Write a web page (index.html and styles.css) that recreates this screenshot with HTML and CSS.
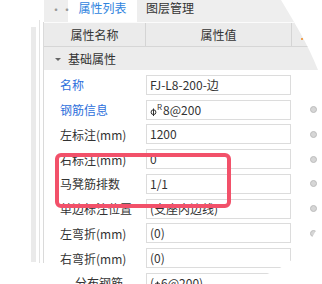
FILE: index.html
```html
<!DOCTYPE html>
<html>
<head>
<meta charset="utf-8">
<link rel="stylesheet" href="styles.css">
</head>
<body>
<div class="app">
  <div class="gutter">
    <div class="band"></div>
    <div class="vline l1"></div>
    <div class="vline l2"></div>
  </div>
  <div class="main">
    <div class="tabbar">
      <div class="tab-pre"><span class="dots">··</span></div>
      <div class="tab active">属性列表</div>
      <div class="tab">图层管理</div>
    </div>
    <div class="header">
      <div class="hc hc1">属性名称</div>
      <div class="hc hc2">属性值</div>
      <div class="hc hc3"><span class="mark"></span></div>
    </div>
    <div class="group"><span class="tri"></span>基础属性</div>
    <div class="rows">
      <div class="row">
        <div class="label blue">名称</div>
        <div class="val">FJ-L8-200-边</div>
      </div>
      <div class="row">
        <div class="label blue">钢筋信息</div>
        <div class="val"><svg class="steel" width="7" height="9" viewBox="0 0 7 9"><circle cx="3.5" cy="5.2" r="2.4" fill="none" stroke="#333" stroke-width="1"/><line x1="3.5" y1="1.5" x2="3.5" y2="9" stroke="#333" stroke-width="1"/></svg><sup class="sup">R</sup>8@200</div>
        <span class="dot"></span>
      </div>
      <div class="row">
        <div class="label">左标注(mm)</div>
        <div class="val">1200</div>
        <span class="dot"></span>
      </div>
      <div class="row">
        <div class="label">右标注(mm)</div>
        <div class="val">0</div>
        <span class="dot"></span>
      </div>
      <div class="row">
        <div class="label">马凳筋排数</div>
        <div class="val">1/1</div>
        <span class="dot"></span>
      </div>
      <div class="row">
        <div class="label">单边标注位置</div>
        <div class="val">(支座内边线)</div>
        <span class="dot"></span>
      </div>
      <div class="row">
        <div class="label">左弯折(mm)</div>
        <div class="val">(0)</div>
        <span class="dot"></span>
      </div>
      <div class="row">
        <div class="label">右弯折(mm)</div>
        <div class="val">(0)</div>
      </div>
      <div class="row">
        <div class="label sub">分布钢筋</div>
        <div class="val">(<svg class="steel" width="7" height="9" viewBox="0 0 7 9"><circle cx="3.5" cy="5.2" r="2.4" fill="none" stroke="#333" stroke-width="1"/><line x1="3.5" y1="1.5" x2="3.5" y2="9" stroke="#333" stroke-width="1"/></svg>6@200)</div>
      </div>
    </div>
  </div>
  <div class="highlight"></div>
</div>
</body>
</html>
```

FILE: styles.css
```css
* { box-sizing: border-box; }
html, body { margin: 0; padding: 0; background: #fff; }
body {
  font-family: "Noto Sans CJK SC", "Noto Sans", sans-serif;
  font-size: 12px;
  color: #333;
  overflow: hidden;
}
.app {
  position: relative;
  width: 322px;
  height: 284px;
  display: flex;
  align-items: flex-start;
  overflow: hidden;
  clip-path: path('M0 0 H281 C294 22 308 44 318 70 L322 84 L322 214 C317 236 300 258 276 270 C262 277 248 281 232 284 L0 284 Z');
}
.gutter {
  width: 44px;
  flex: none;
  display: flex;
  align-items: flex-start;
  padding-left: 31px;
}
.band {
  width: 5px;
  height: 235px;
  margin-top: 27px;
  background: #eaeaea;
}
.vline {
  width: 1px;
  background: #e2e2e2;
}
.l1 { margin-left: 3px; margin-top: 20px; height: 243px; }
.l2 { margin-left: 3px; margin-top: 22px; height: 241px; background: #dadada; }
.main {
  flex: none;
  width: 278px;
}
.tabbar {
  height: 22px;
  display: flex;
  background: #eeeeee;
}
.tab-pre {
  width: 24px;
  position: relative;
}
.dots {
  display: block;
  padding-left: 6px;
  line-height: 20px;
  color: #999;
  font-size: 12px;
  letter-spacing: -1px;
}
.tab {
  height: 22px;
  line-height: 15px;
  padding-left: 9px;
  font-size: 12px;
  color: #333;
}
.tab.active {
  width: 69px;
  padding-left: 0;
  text-align: center;
  background: #fff;
  color: #2f84de;
}
.header {
  display: flex;
  border-top: 1px solid #fbfbfb;
  border-bottom: 1px solid #d6d6d6;
  background: #ebebeb;
  height: 25px;
}
.hc {
  line-height: 23px;
  text-align: center;
  color: #333;
}
.hc1 { width: 102px; border-right: 1px solid #d4d4d4; }
.hc2 { width: 146px; border-right: 1px solid #d4d4d4; }
.hc3 { flex: 1; position: relative; }
.mark {
  display: block;
  width: 2px;
  height: 2px;
  margin: 15px 0 0 9px;
  background: #f0a050;
}
.group {
  height: 23px;
  line-height: 23px;
  background: #ececec;
  padding-left: 11px;
  display: flex;
  align-items: center;
  gap: 7px;
}
.tri {
  width: 0;
  height: 0;
  border-left: 3px solid transparent;
  border-right: 3px solid transparent;
  border-top: 3px solid #666;
  margin-top: 1px;
}
.rows {
  padding-top: 2.5px;
  background: #fff;
}
.row {
  height: 24.75px;
  display: flex;
  align-items: center;
}
.label {
  width: 102px;
  padding-left: 16px;
  white-space: nowrap;
  color: #333;
}
.label.blue { color: #2d6fdc; }
.label.sub { padding-left: 31px; }
.val {
  width: 145px;
  height: 20px;
  border: 1px solid #dcdcdc;
  background: #fff;
  padding-left: 3px;
  line-height: 18px;
  white-space: nowrap;
  overflow: hidden;
}
.steel { vertical-align: -1px; }
.sup {
  font-size: 8px;
  vertical-align: 5px;
  line-height: 1;
  margin-right: 1px;
}
.dot {
  width: 7px;
  height: 7px;
  margin-left: 18.5px;
  border-radius: 50%;
  background: #d6d6d6;
  border: 1px solid #bcbcbc;
}
.highlight {
  position: absolute;
  left: 55px;
  top: 153px;
  width: 176px;
  height: 55px;
  border: 4.5px solid #f2516a;
  border-radius: 6px;
}
```
